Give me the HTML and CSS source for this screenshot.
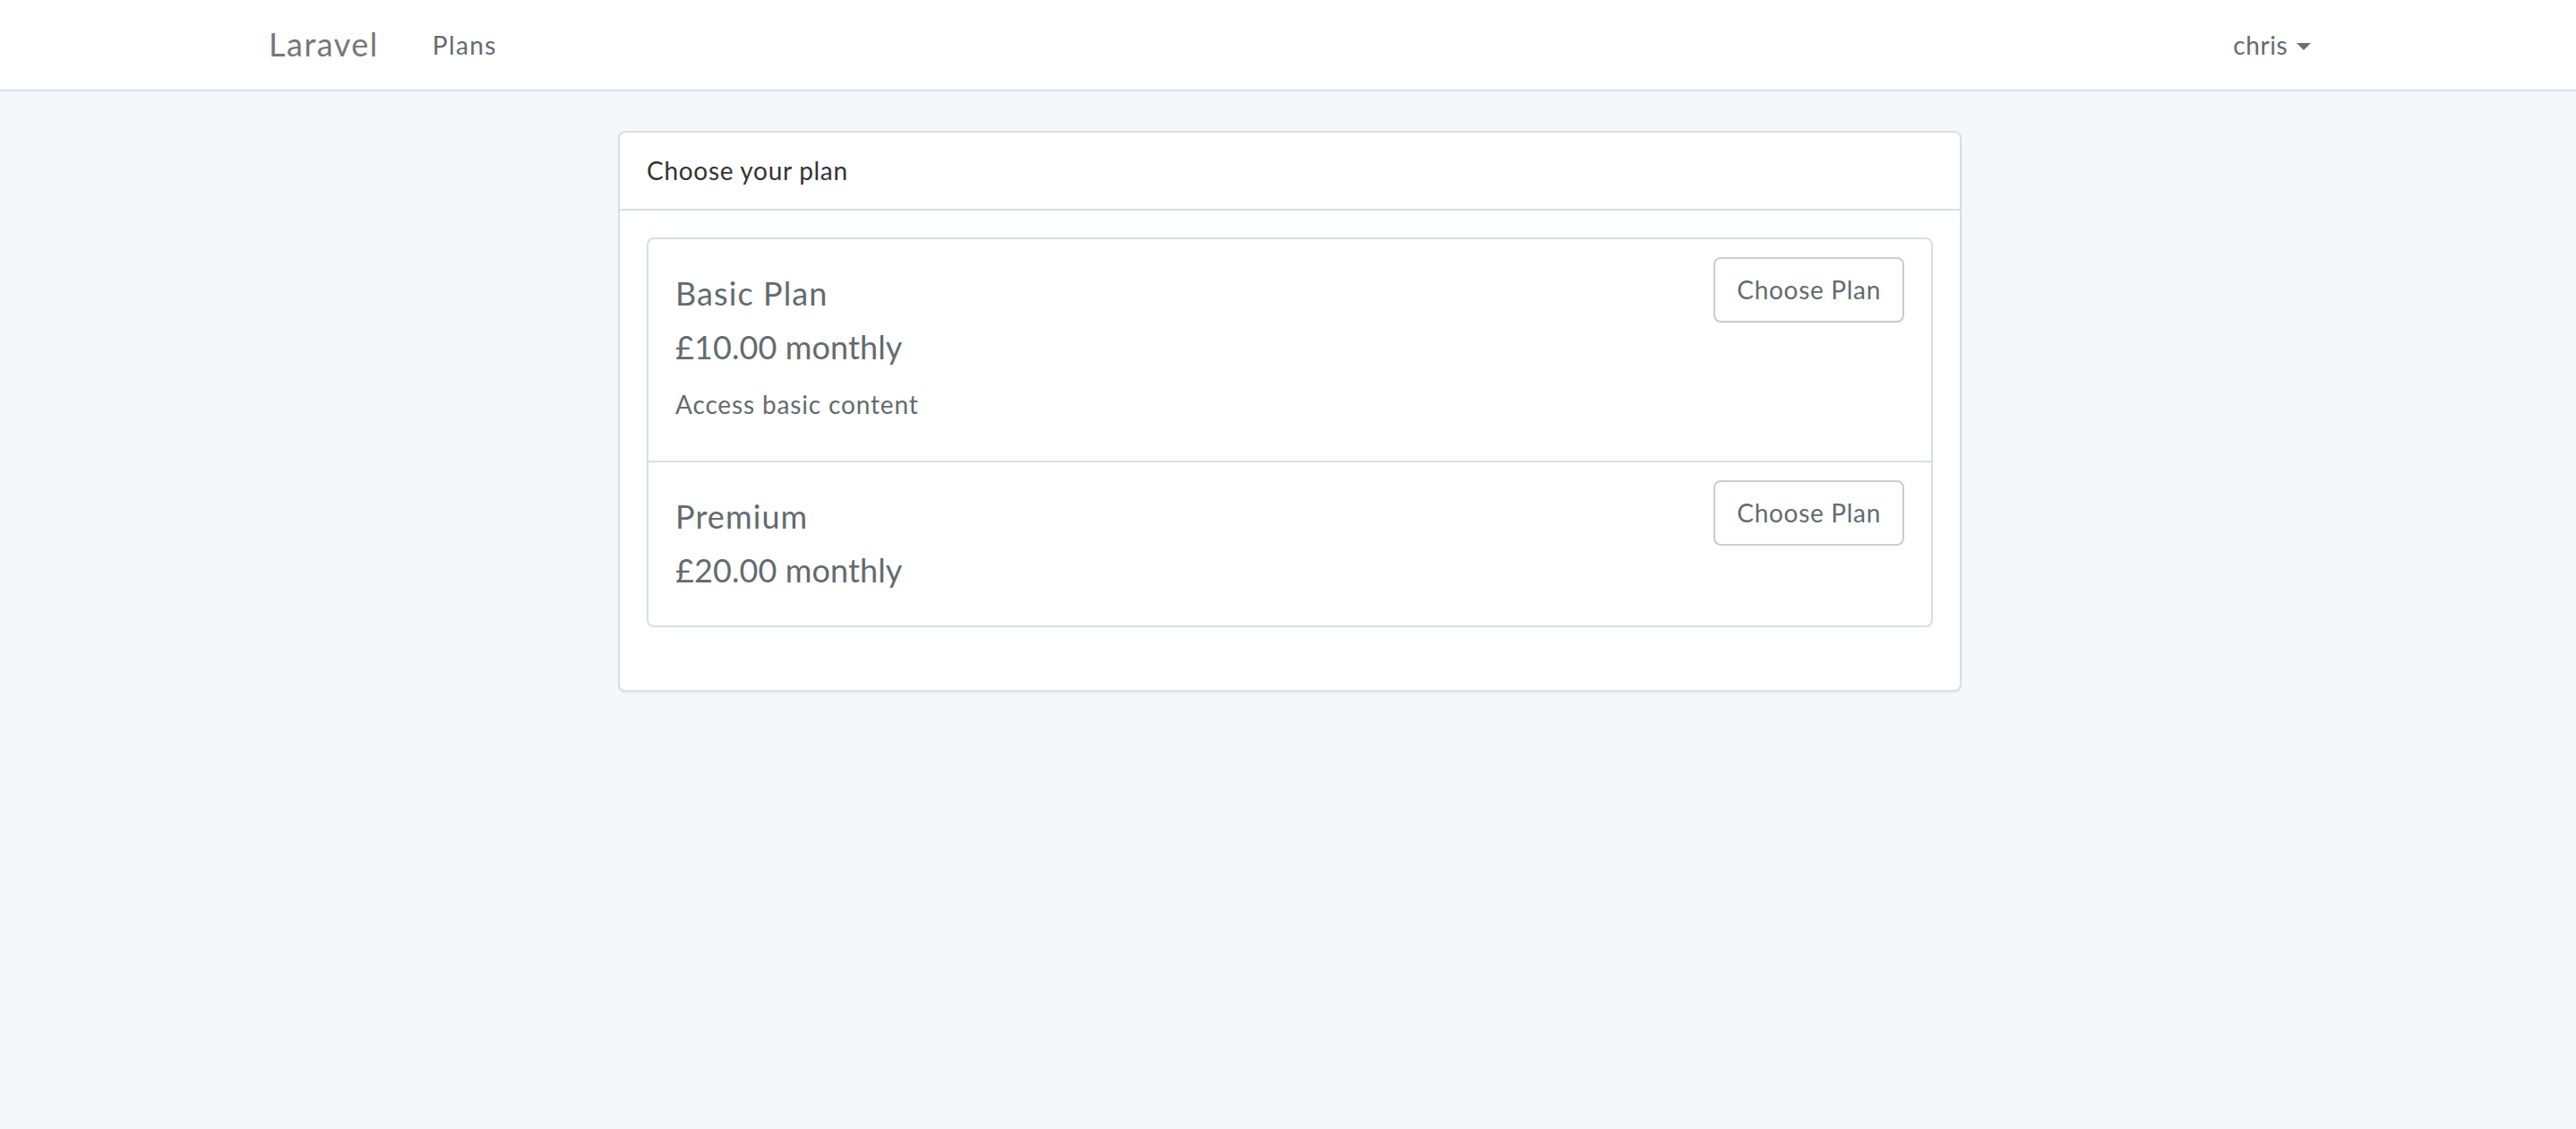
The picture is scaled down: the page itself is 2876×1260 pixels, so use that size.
FILE: index.html
```
<!DOCTYPE html>
<html lang="en">
<head>
<meta charset="utf-8">
<title>Laravel</title>
<link rel="stylesheet" href="styles.css">
</head>
<body>
<nav class="navbar">
  <div class="container nav-inner">
    <a class="brand" href="#">Laravel</a>
    <ul class="nav-links">
      <li><a class="nav-link plans-link" href="#">Plans</a></li>
    </ul>
    <ul class="nav-links nav-right">
      <li><a class="nav-link user-link" href="#">chris <span class="caret"></span></a></li>
    </ul>
  </div>
</nav>

<main class="container">
  <div class="row">
    <div class="col-main">
      <div class="panel">
        <div class="panel-heading">Choose your plan</div>
        <div class="panel-body">
          <ul class="list-group">
            <li class="list-group-item">
              <a class="btn" href="#">Choose Plan</a>
              <h4 class="plan-name">Basic Plan</h4>
              <h4 class="plan-price">£10.00 monthly</h4>
              <p class="plan-desc">Access basic content</p>
            </li>
            <li class="list-group-item">
              <a class="btn" href="#">Choose Plan</a>
              <h4 class="plan-name">Premium</h4>
              <h4 class="plan-price">£20.00 monthly</h4>
            </li>
          </ul>
        </div>
      </div>
    </div>
  </div>
</main>
</body>
</html>
```
FILE: styles.css
```
*, *::before, *::after { box-sizing: border-box; }

html, body { min-height: 100%; }

body {
  margin: 0;
  background: #f5f8fa;
  color: #636b6f;
  font-family: "Lato", "Open Sans", sans-serif;
  font-size: 28px;
  line-height: 1.6;
}

a { text-decoration: none; color: inherit; }

.container {
  width: 2340px;
  margin-left: calc(50% - 1168px);
  padding: 0 30px;
}

/* Navbar */
.navbar {
  background: #fff;
  border-bottom: 2px solid #d3e0e9;
  margin-bottom: 44px;
}

.nav-inner {
  display: flex;
  align-items: flex-start;
  height: 100px;
}

.brand {
  margin-left: -30px;
  padding: 29px 30px 31px 30px;
  font-size: 36px;
  line-height: 40px;
  color: #777;
  letter-spacing: 1.5px;
}

.nav-links {
  list-style: none;
  margin: 0;
  padding: 0;
  display: flex;
}

.nav-right {
  margin-left: auto;
  margin-right: -30px;
}

.nav-link {
  display: block;
  padding: 30px;
  line-height: 40px;
  color: #636b6f;
}

.plans-link { letter-spacing: 1.4px; }
.user-link { letter-spacing: 0.6px; }

.caret {
  display: inline-block;
  width: 0;
  height: 0;
  margin-left: 2px;
  vertical-align: middle;
  border-top: 8px solid #6a6f72;
  border-left: 8px solid transparent;
  border-right: 8px solid transparent;
  position: relative;
  top: -2px;
}

/* Grid */
.row { margin: 0 -30px; }

.col-main {
  width: 66.6667%;
  margin-left: 16.6667%;
  padding: 0 30px;
}

/* Panel */
.panel {
  background: #fff;
  border: 2px solid #d3e0e9;
  border-radius: 8px;
  box-shadow: 0 2px 2px rgba(0, 0, 0, 0.05);
  margin-bottom: 44px;
}

.panel-heading {
  padding: 20px 30px;
  border-bottom: 2px solid #d3e0e9;
  color: #333;
  letter-spacing: 0.7px;
}

.panel-body { padding: 30px; }

.list-group {
  list-style: none;
  margin: 0 0 40px;
  padding: 0;
}

.list-group-item {
  display: flow-root;
  background: #fff;
  border: 2px solid #d3e0e9;
  padding: 20px 30px;
  margin-bottom: -2px;
}

.list-group-item:first-child {
  border-top-left-radius: 8px;
  border-top-right-radius: 8px;
}

.list-group-item:last-child {
  margin-bottom: 0;
  border-bottom-left-radius: 8px;
  border-bottom-right-radius: 8px;
}

.btn {
  float: right;
  display: inline-block;
  padding: 12px 24px;
  border: 2px solid #ccc;
  border-radius: 8px;
  background: #fff;
  color: #636b6f;
  font-size: 28px;
  line-height: 44.8px;
  letter-spacing: 0.7px;
}

h4 {
  font-size: 36px;
  font-weight: 400;
  line-height: 1.1;
  margin: 21px 0;
}

.plan-name { letter-spacing: 1.1px; }
.plan-price { letter-spacing: 0.1px; }

.plan-desc {
  margin: 0 0 20px;
  letter-spacing: 0.85px;
}
```
